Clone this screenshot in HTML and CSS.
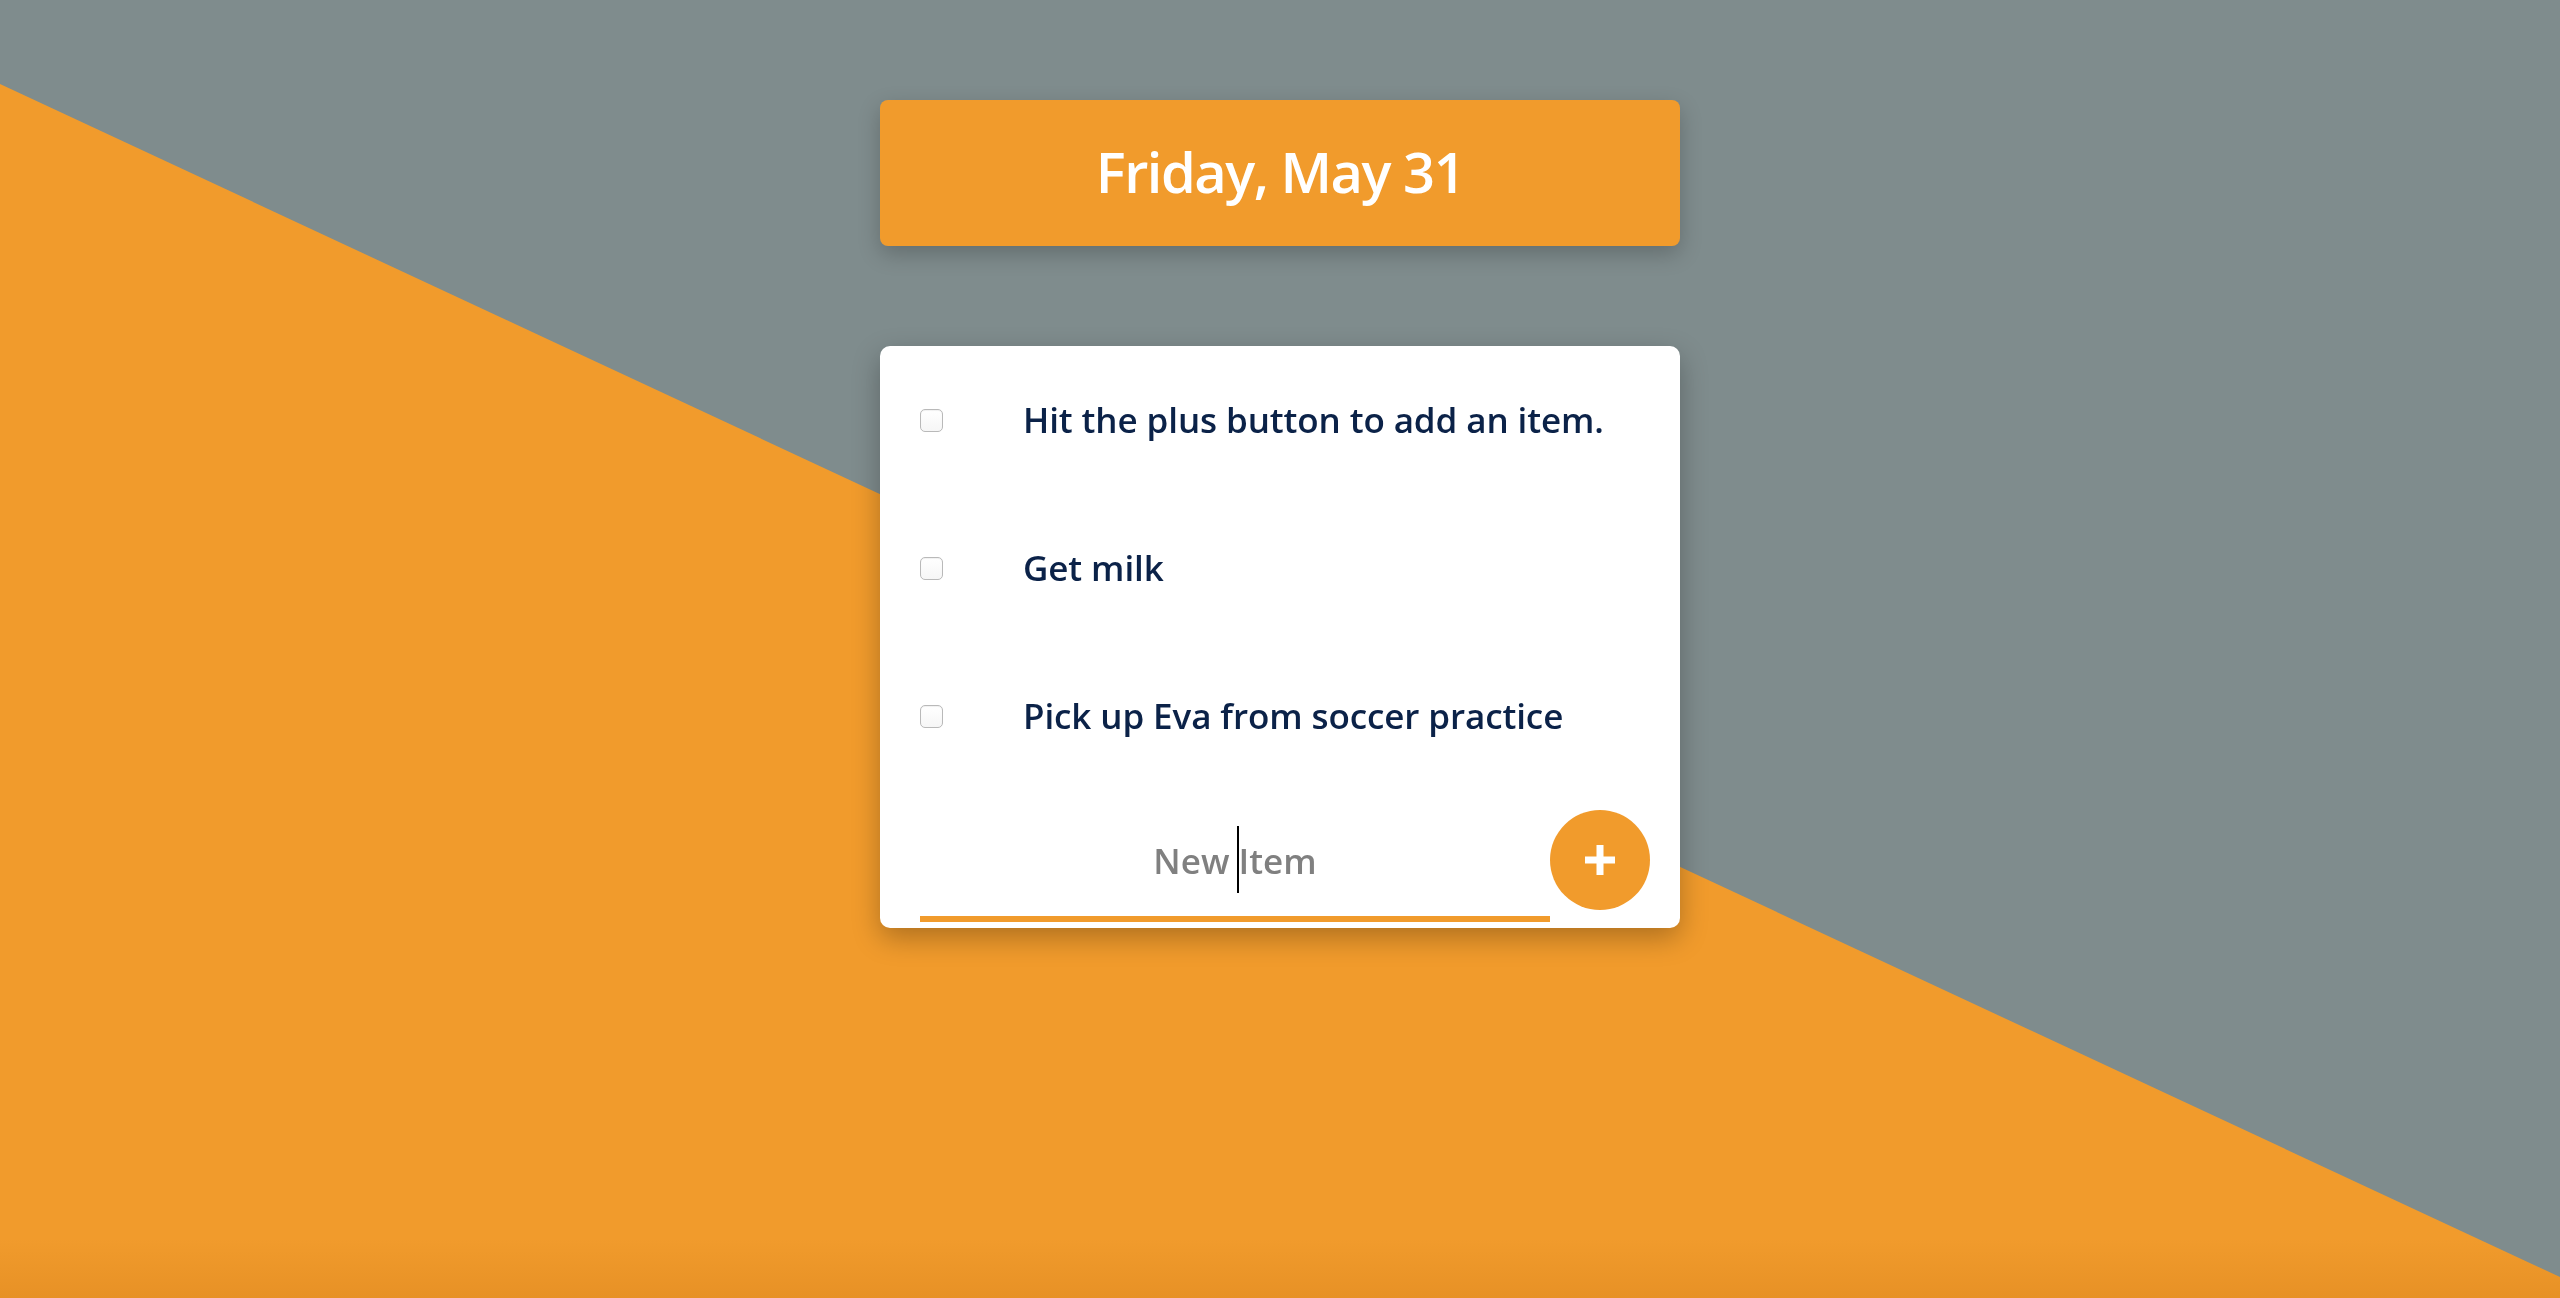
FILE: index.html
```html
<!DOCTYPE html>
<html lang="en">
<head>
<meta charset="utf-8">
<title>To Do</title>
<link rel="stylesheet" href="styles.css">
</head>
<body>
<div class="backdrop"></div>
<main class="page">
  <header class="date-box">
    <h1 class="date-title">Friday, May 31</h1>
  </header>
  <section class="todo-card">
    <div class="todo-item">
      <input class="todo-check" type="checkbox">
      <p class="todo-text">Hit the plus button to add an item.</p>
    </div>
    <div class="todo-item">
      <input class="todo-check" type="checkbox">
      <p class="todo-text">Get milk</p>
    </div>
    <div class="todo-item">
      <input class="todo-check" type="checkbox">
      <p class="todo-text">Pick up Eva from soccer practice</p>
    </div>
    <form class="add-row">
      <div class="input-wrap">
        <input class="new-item" type="text" placeholder="New Item">
        <span class="caret"></span>
      </div>
      <button class="add-btn" type="button" aria-label="Add">
        <svg width="30" height="30" viewBox="0 0 30 30"><rect x="11.5" y="0" width="7" height="30" fill="#fff"/><rect x="0" y="11.5" width="30" height="7" fill="#fff"/></svg>
      </button>
    </form>
  </section>
</main>
</body>
</html>
```
FILE: styles.css
```css
html, body {
  margin: 0;
  padding: 0;
  height: 100%;
}
body {
  background: #7f8c8d;
  font-family: "Open Sans", "Noto Sans", sans-serif;
  overflow: hidden;
  position: relative;
}
.backdrop {
  position: fixed;
  inset: 0;
  background: #f19b2c;
  clip-path: polygon(0 84px, 100% 1277px, 100% 100%, 0 100%);
  z-index: 0;
}
.backdrop::after {
  content: "";
  position: absolute;
  left: 0;
  right: 0;
  bottom: 0;
  height: 60px;
  background: linear-gradient(to bottom, rgba(170, 85, 0, 0), rgba(170, 85, 0, 0.14));
}
.page {
  position: relative;
  z-index: 1;
  display: flex;
  flex-direction: column;
  align-items: center;
  padding-top: 100px;
}
.date-box {
  width: 800px;
  height: 146px;
  box-sizing: border-box;
  padding-bottom: 4px;
  background: #f19b2c;
  border-radius: 8px;
  box-shadow: 0 8px 22px rgba(0, 0, 0, 0.22);
  display: flex;
  align-items: center;
  justify-content: center;
  margin-bottom: 100px;
}
.date-title {
  margin: 0;
  color: #fff;
  font-size: 56px;
  font-weight: 600;
  letter-spacing: -1.5px;
  line-height: 1;
}
.todo-card {
  width: 800px;
  background: #fff;
  border-radius: 10px;
  box-shadow: 0 10px 28px rgba(0, 0, 0, 0.28);
}
.todo-item {
  height: 148px;
  display: flex;
  align-items: center;
  padding-left: 40px;
}
.todo-check {
  appearance: none;
  -webkit-appearance: none;
  width: 23px;
  height: 23px;
  margin: 0 80px 0 0;
  border: 1px solid #b9b9b9;
  border-radius: 5px;
  background: linear-gradient(#fff, #f6f6f6);
  box-shadow: inset 0 1px 1px rgba(0, 0, 0, 0.06);
  flex: none;
}
.todo-text {
  margin: 0 0 2px;
  color: #0b2248;
  font-size: 35px;
  font-weight: 600;
  letter-spacing: -0.1px;
}
.add-row {
  height: 138px;
  box-sizing: border-box;
  display: flex;
  align-items: flex-start;
  padding: 20px 30px 0 40px;
  margin: 0;
}
.input-wrap {
  position: relative;
  width: 630px;
}
.new-item {
  display: block;
  width: 100%;
  height: 112px;
  box-sizing: border-box;
  border: none;
  border-bottom: 6px solid #f19b2c;
  padding: 0 0 6px;
  font-family: "Open Sans", "Noto Sans", sans-serif;
  font-size: 35px;
  font-weight: 600;
  letter-spacing: 0;
  text-align: center;
  color: #333;
  background: transparent;
  outline: none;
}
.new-item::placeholder {
  color: #808080;
}
.caret {
  position: absolute;
  left: 317px;
  top: 16px;
  width: 2px;
  height: 67px;
  background: #000;
}
.add-btn {
  width: 100px;
  height: 100px;
  border-radius: 50%;
  border: none;
  background: #f19b2c;
  display: flex;
  align-items: center;
  justify-content: center;
  padding: 0;
  cursor: pointer;
  flex: none;
}
```
